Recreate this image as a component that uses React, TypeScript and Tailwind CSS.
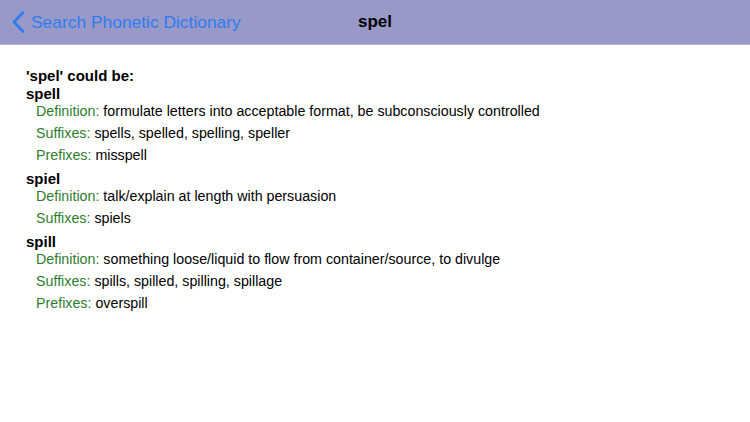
import React from "react";

type Entry = { word: string; rows: [string, string][] };

const entries: Entry[] = [
  {
    word: "spell",
    rows: [
      ["Definition:", "formulate letters into acceptable format, be subconsciously controlled"],
      ["Suffixes:", "spells, spelled, spelling, speller"],
      ["Prefixes:", "misspell"],
    ],
  },
  {
    word: "spiel",
    rows: [
      ["Definition:", "talk/explain at length with persuasion"],
      ["Suffixes:", "spiels"],
    ],
  },
  {
    word: "spill",
    rows: [
      ["Definition:", "something loose/liquid to flow from container/source, to divulge"],
      ["Suffixes:", "spills, spilled, spilling, spillage"],
      ["Prefixes:", "overspill"],
    ],
  },
];

export default function App() {
  return (
    <div className="w-[750px] h-[422px] bg-white overflow-hidden" style={{ fontFamily: '"Liberation Sans", Arial, sans-serif' }}>
      <div className="relative h-[45px] bg-[#9999c8] border-b border-[#b4b4d2] flex items-center">
        <div className="flex items-center pl-[12px] text-[#2f7cf0] text-[17.4px]">
          <svg width="13" height="22" viewBox="0 0 13 22" className="mr-[6px]">
            <path d="M11 1.5 L2 11 L11 20.5" fill="none" stroke="#2f7cf0" strokeWidth="2.6" strokeLinecap="round" strokeLinejoin="round" />
          </svg>
          <span>Search Phonetic Dictionary</span>
        </div>
        <div className="absolute left-0 right-0 top-0 bottom-0 flex items-center justify-center pointer-events-none">
          <span className="text-[17px] font-bold text-black">spel</span>
        </div>
      </div>
      <div className="pl-[26px] pt-[22px] text-[14.25px] text-black">
        <div className="text-[15px] font-bold leading-[18px]">'spel' could be:</div>
        {entries.map((e, i) => (
          <div key={e.word} className={i === 0 ? "" : "mt-[6px]"}>
            <div className="text-[15px] font-bold leading-[18px]">{e.word}</div>
            <div className="pl-[10px]">
              {e.rows.map(([label, val], j) => (
                <div key={label} className={"leading-[17px] " + (j === 0 ? "" : "mt-[5px]")}>
                  <span className="text-[#2e7d2e]">{label}</span> {val}
                </div>
              ))}
            </div>
          </div>
        ))}
      </div>
    </div>
  );
}
